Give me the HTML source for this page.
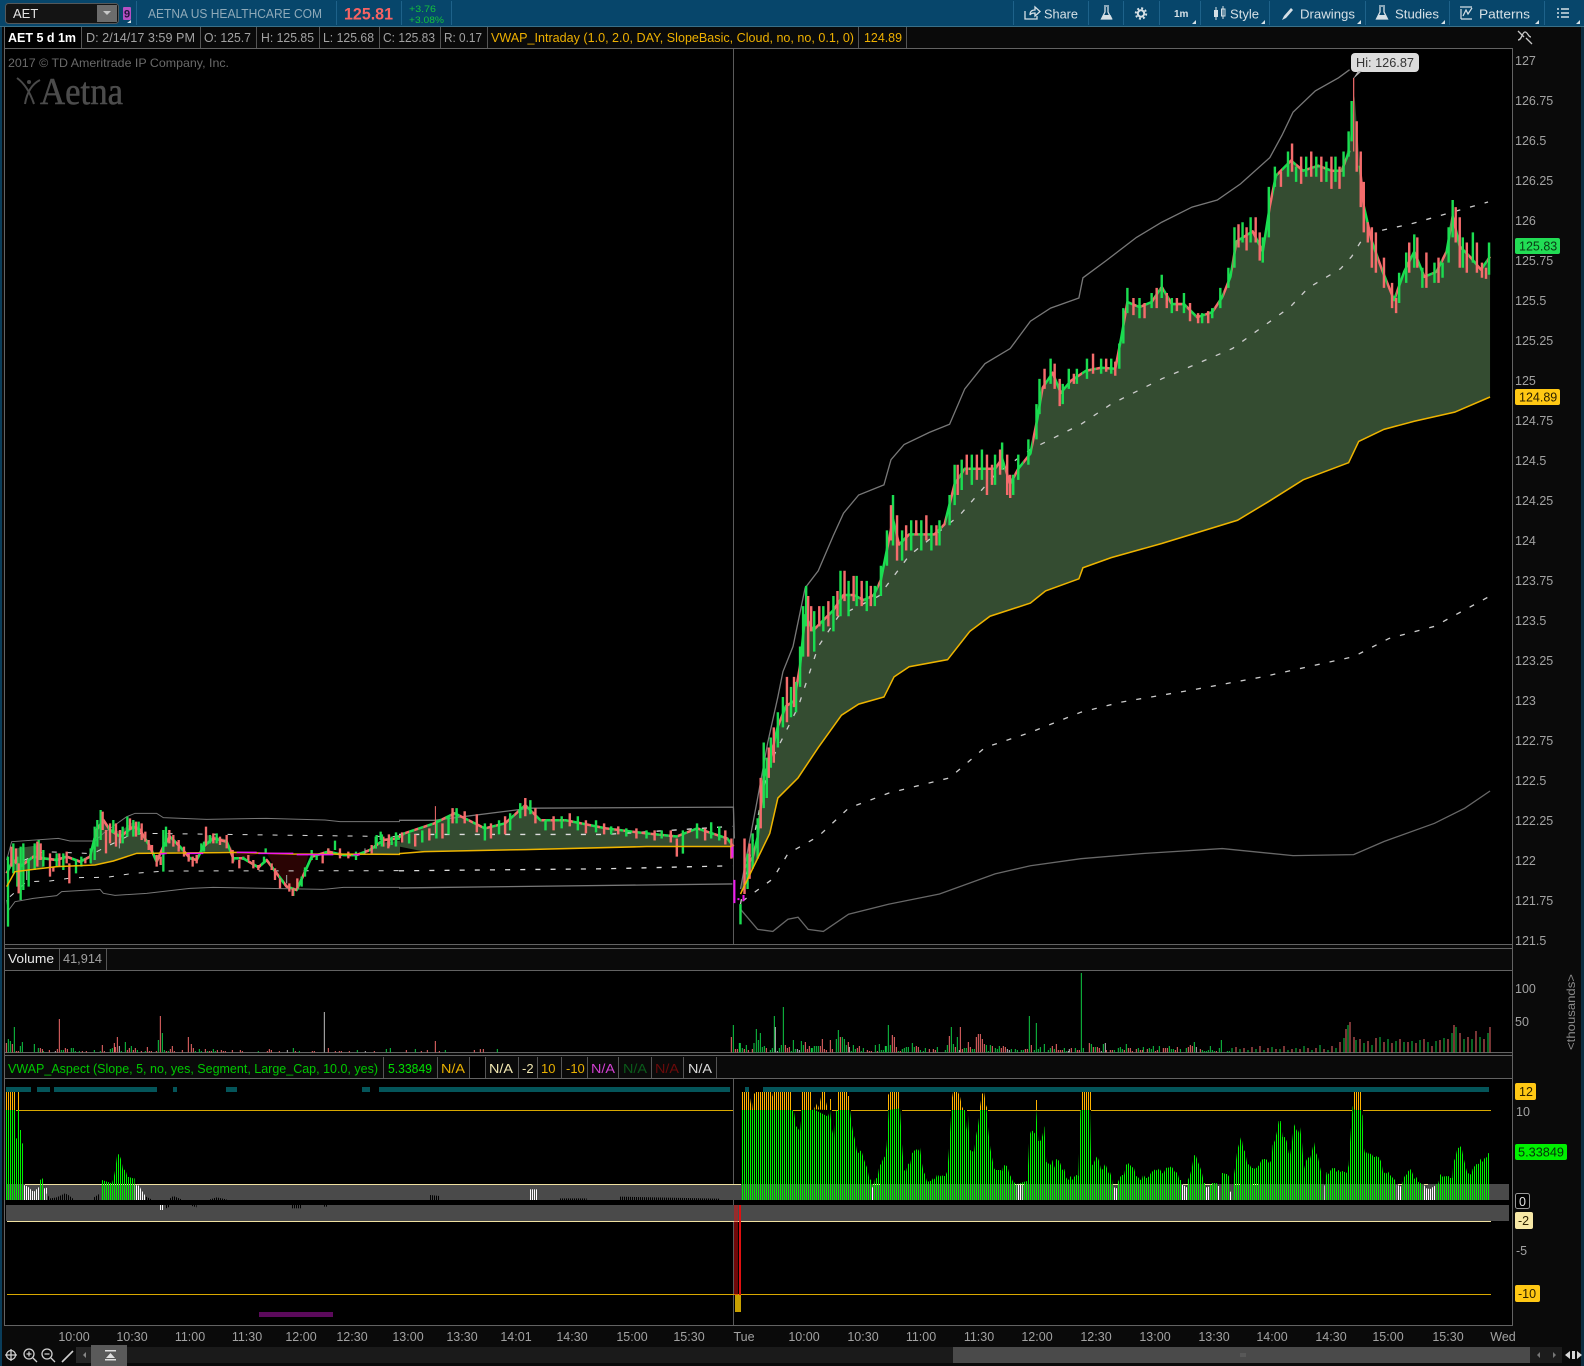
<!DOCTYPE html>
<html><head><meta charset="utf-8"><title>AET chart</title>
<style>
html,body{margin:0;padding:0;background:#0a0a0a;width:1584px;height:1366px;overflow:hidden}
svg{display:block}
text{font-family:"Liberation Sans",sans-serif;font-size:13px}
.ax text{font-size:12.5px;fill:#a2a2a2}
.tm text{font-size:12.5px;fill:#a2a2a2;text-anchor:middle}
.tb text{fill:#d6e0e6;font-size:13px}
</style></head><body>
<svg width="1584" height="1366" viewBox="0 0 1584 1366" xmlns="http://www.w3.org/2000/svg">
<defs>
<pattern id="g" width="6" height="6" patternUnits="userSpaceOnUse"><rect width="3" height="6" fill="#00f000"/></pattern>
<pattern id="o" width="6" height="6" patternUnits="userSpaceOnUse"><rect width="3" height="6" fill="#ffb400"/></pattern>
<pattern id="k" width="6" height="6" patternUnits="userSpaceOnUse"><rect width="3" height="6" fill="#000"/></pattern>
<pattern id="w" width="6" height="6" patternUnits="userSpaceOnUse"><rect width="3" height="6" fill="#fff"/></pattern>
<pattern id="cs" width="9" height="10" patternUnits="userSpaceOnUse"><rect width="5" height="10" fill="#1bdc50"/><rect x="5" width="4" height="10" fill="#f46c6c"/></pattern>
<pattern id="cz" width="27" height="30" patternUnits="userSpaceOnUse"><rect width="15" height="30" fill="#1bdc50"/><rect x="15" width="12" height="30" fill="#f46c6c"/></pattern>
</defs>
<rect width="1584" height="1366" fill="#0a0a0a"/>
<rect x="0" y="0" width="2" height="1366" fill="#0a3d5a"/>
<rect x="1581" y="0" width="3" height="1366" fill="#0a2c40"/>

<!-- top bar -->
<rect x="0" y="0" width="1584" height="26" fill="#07466b"/>
<rect x="0" y="26" width="1584" height="1" fill="#3a7088"/>
<g stroke="#1e628a" stroke-width="1"><path d="M136.500 1V25M336.500 1V25M401.500 1V25M451.500 1V25M1013.500 1V25M1088.500 1V25M1123.500 1V25M1159.500 1V25M1200.500 1V25M1269.500 1V25M1365.500 1V25M1449.500 1V25M1544.500 1V25"/></g>
<rect x="5.500" y="3.500" width="113" height="20" rx="3" fill="#141414" stroke="#54585a"/>
<rect x="97" y="5" width="20" height="17" fill="#6c6c6c"/>
<path d="M103 11h8l-4 4z" fill="#c8c8c8"/>
<text x="13" y="18" fill="#e2e2e2">AET</text>
<rect x="123" y="7" width="8" height="13" rx="1" fill="#b44fc4"/>
<text x="124" y="17.500" fill="#23123a" style="font-size:11px;font-weight:bold">9</text>
<path d="M127 23l4-3v3z" fill="#d8e0e6"/>
<text x="148" y="18" fill="#8faab9" textLength="174" lengthAdjust="spacingAndGlyphs">AETNA US HEALTHCARE COM</text>
<text x="344" y="19.500" fill="#f76363" style="font-size:17px;font-weight:bold" textLength="49" lengthAdjust="spacingAndGlyphs">125.81</text>
<text x="409" y="12" fill="#14c23c" style="font-size:9px" textLength="27" lengthAdjust="spacingAndGlyphs">+3.76</text>
<text x="409" y="23" fill="#14c23c" style="font-size:9px" textLength="35" lengthAdjust="spacingAndGlyphs">+3.08%</text>

<g class="tb">
<path d="M1025 11v8h12v-3M1030 15c0-4 2-5 5-5v-3l5 4.500-5 4.500v-3c-2 0-4 0-5 2z" fill="none" stroke="#d6e0e6" stroke-width="1.300"/>
<text x="1044" y="18.500" textLength="34" lengthAdjust="spacingAndGlyphs">Share</text>
<path d="M1104 6h5M1105 7v5l-3.500 7h10l-3.500-7V7" fill="none" stroke="#d6e0e6" stroke-width="1.300"/><path d="M1103.500 15h7l2 4h-11z" fill="#d6e0e6"/>
<circle cx="1141" cy="13.500" r="3.200" fill="none" stroke="#d6e0e6" stroke-width="2"/><circle cx="1141" cy="13.500" r="5.200" fill="none" stroke="#d6e0e6" stroke-width="2" stroke-dasharray="2 2.080"/>
<text x="1174" y="17" style="font-size:10px;font-weight:bold">1m</text>
<path d="M1216 7v13M1223 6v13" stroke="#d6e0e6"/><rect x="1214" y="10" width="4" height="7" fill="#d6e0e6"/><rect x="1221.500" y="9" width="3.500" height="7" fill="none" stroke="#d6e0e6"/>
<text x="1230" y="18.500" textLength="29" lengthAdjust="spacingAndGlyphs">Style</text>
<path d="M1282 20l2-4 7-8 2 2-7 8z" fill="#d6e0e6"/>
<text x="1300" y="18.500" textLength="55" lengthAdjust="spacingAndGlyphs">Drawings</text>
<path d="M1379 6h6M1380 7v5l-3.500 7h11L1384 12V7" fill="none" stroke="#d6e0e6" stroke-width="1.300"/><path d="M1378.500 15h7l2 4h-11z" fill="#d6e0e6"/>
<text x="1395" y="18.500" textLength="44" lengthAdjust="spacingAndGlyphs">Studies</text>
<path d="M1460 7h12M1461 9v10M1461 19h11M1463 16l3-6 2 4 4-6" fill="none" stroke="#d6e0e6" stroke-width="1.200"/>
<text x="1479" y="18.500" textLength="51" lengthAdjust="spacingAndGlyphs">Patterns</text>
<path d="M1557 9h2M1557 13h2M1557 17h2M1561 9h8M1561 13h8M1561 17h8" stroke="#d6e0e6" stroke-width="1.500"/>
<path d="M1192 24l4-4v4zM1261 24l4-4v4zM1357 24l4-4v4zM1441 24l4-4v4zM1535 24l4-4v4zM1576 24l4-4v4z" fill="#d6e0e6"/>
</g>

<!-- header row -->
<rect x="5" y="27" width="76" height="21" fill="#000"/>
<text x="8" y="42" fill="#fff" style="font-weight:bold" textLength="68" lengthAdjust="spacingAndGlyphs">AET 5 d 1m</text>
<g fill="#a2a2a2">
<text x="86" y="42" textLength="109" lengthAdjust="spacingAndGlyphs">D: 2/14/17 3:59 PM</text>
<text x="204" y="42" textLength="47" lengthAdjust="spacingAndGlyphs">O: 125.7</text>
<text x="261" y="42" textLength="53" lengthAdjust="spacingAndGlyphs">H: 125.85</text>
<text x="323" y="42" textLength="51" lengthAdjust="spacingAndGlyphs">L: 125.68</text>
<text x="383" y="42" textLength="52" lengthAdjust="spacingAndGlyphs">C: 125.83</text>
<text x="444" y="42" textLength="38" lengthAdjust="spacingAndGlyphs">R: 0.17</text>
</g>
<text x="491" y="42" fill="#eeb000" textLength="363" lengthAdjust="spacingAndGlyphs">VWAP_Intraday (1.0, 2.0, DAY, SlopeBasic, Cloud, no, no, 0.1, 0)</text>
<text x="864" y="42" fill="#eeb000" textLength="38" lengthAdjust="spacingAndGlyphs">124.89</text>
<path d="M81.500 27V48M200.500 27V48M256.500 27V48M319.500 27V48M379.500 27V48M440.500 27V48M487.500 27V48M858.500 27V48M906.500 27V48" stroke="#555"/>

<!-- pane backgrounds -->
<rect x="5" y="49" width="1507" height="895" fill="#000"/>
<rect x="5" y="971" width="1507" height="81" fill="#000"/>
<rect x="5" y="1079" width="1507" height="246" fill="#000"/>
<g stroke="#636363" fill="none">
<path d="M4.500 27V1325.500H1512.500V48M4.500 48.500H1512.500M4.500 944.500H1512.500M4.500 948.500H1512.500M4.500 970.500H1512.500M4.500 1052.500H1512.500M4.500 1055.500H1512.500M4.500 1078.500H1512.500"/>
</g>
<path d="M733.500 49V944M733.500 1079V1325" stroke="#5a5a5a"/>

<text x="8" y="67" fill="#6a6a6a" style="font-size:12px" textLength="221" lengthAdjust="spacingAndGlyphs">2017 © TD Ameritrade IP Company, Inc.</text>
<path d="M17 78Q28 86 34 104M40 80Q28 86 25 104" fill="none" stroke="#4a4a4a" stroke-width="2"/><circle cx="29" cy="82" r="2" fill="#4a4a4a"/>
<text x="40" y="104" fill="#4c4c4c" stroke="#4c4c4c" stroke-width=".5" style="font-family:'Liberation Serif',serif;font-size:38px" textLength="83" lengthAdjust="spacingAndGlyphs">Aetna</text>

<!-- MONDAY left part in zoom coords -->
<g transform="translate(0,780) scale(.33333)">
<g fill="#344c31">
<polygon points="40,270 50,205 120,195 130,262 45,272"/>
<polygon points="270,252 290,150 310,115 330,145 360,155 400,125 420,145 450,205 460,218 410,220 340,243 285,255"/>
<polygon points="490,220 495,160 520,172 555,215"/>
<polygon points="600,216 620,165 680,178 700,215"/>
<polygon points="1110,222 1130,190 1200,182 1200,222"/>
</g>
<g fill="#2a0404">
<polygon points="700,220 720,240 780,220"/>
<polygon points="800,220 830,270 860,320 890,325 915,265 925,225"/>
</g>
<g fill="none" stroke-width="3">
<path stroke="#777" d="M20 240L35 185L175 175L210 183L285 183L310 160L345 135L380 110L405 100L470 100L490 113L620 118L800 115L975 120L1020 125L1200 125"/>
<path stroke="#777" d="M20 360L25 392L45 365L100 355L170 347L185 335L300 328L310 340L345 346L440 340L570 325L640 322L970 328L1030 322L1200 322"/>
<path stroke="#ddd" stroke-dasharray="15 30" d="M30 260L130 215L260 220L290 215L390 165L430 160L1200 170"/>
<path stroke="#ddd" stroke-dasharray="15 30" d="M30 350L80 305L150 303L220 293L320 292L400 280L500 273L1200 272"/>
</g>
<path fill="none" stroke="url(#cz)" stroke-width="8" stroke-linejoin="round" d="M20 280L40 240L60 260L100 230L130 235L170 240L200 230L240 245L270 230L290 150L310 120L330 150L360 170L400 140L420 150L450 200L470 245L490 200L510 170L540 200L570 235L590 240L610 200L640 175L680 185L700 235L730 235L775 262L800 240L830 280L860 320L890 330L915 275L935 230L985 215L1030 225L1070 225L1110 210L1150 180L1200 175"/>
<g fill="none" stroke-width="7">
<path stroke="#1bdc50" d="M24 230V440M40 190V280M52 230V320M62 200V360M70 190V330M86 240V320M104 190V270M116 180V240M130 210V260M170 220V260M190 220V270M228 240V280M244 230V260M272 205V250M284 140V240M292 120V200M302 90V180M340 120V160M368 140V190M382 110V170M400 120V170M416 125V165M490 150V275M498 140V200M604 190V220M612 185V215M630 165V190M650 160V190M700 235V245M730 230V240M792 230V250M797 205V220M880 325V348M905 290V320M915 262V290M935 210V240M950 225V240M985 205V225M1005 182V210M1068 215V240M1130 165V190M1142 155V180M1175 170V195M1195 165V180"/>
<path stroke="#f46c6c" d="M34 200V260M48 205V250M56 250V340M112 185V260M122 190V240M150 220V290M160 260V275M178 220V260M200 215V250M208 250V310M256 235V250M308 95V150M318 150V220M330 130V190M348 130V200M360 150V190M390 115V150M408 125V170M425 130V180M436 155V185M446 180V210M456 195V215M470 225V260M482 230V255M508 150V190M520 165V200M536 180V215M552 200V230M566 220V245M578 230V260M590 225V250M618 140V190M640 160V190M660 170V195M680 165V205M698 210V250M718 240V265M745 225V240M760 240V265M775 255V270M815 250V270M825 265V300M840 295V325M868 310V335M878 325V348M892 295V325M968 220V250M985 205V225M1020 205V235M1045 215V235M1115 195V220M1150 170V200M1165 175V205M1188 165V190"/>
<path stroke="#aaa" stroke-width="3" d="M358 175V205M80 270V300M860 285V310M1095 205V225"/>
</g>
<path fill="none" stroke="#eeb400" stroke-width="4.500" d="M20 320L45 275L100 268L170 260L285 255L340 243L410 220L660 218L710 217L880 222L1200 223"/>
<path fill="none" stroke="#f018f0" stroke-width="4.500" d="M480 222L500 220M560 220H610M710 217H770M775 220H880M890 224H1000M1060 224H1080"/>
</g>

<!-- main chart in display coords -->
<g transform="scale(1.0102)">
<!-- Monday right part -->
<polygon fill="#344c31" points="395,838 400,825 430,815 450,805 480,820 500,815 520,797 535,812 560,812 600,820 640,825 670,828 690,820 720,830 726,838 640,838 520,841 420,843"/>
<g fill="none" stroke-width="1.300">
<path stroke="#777" d="M395 812L430 812L525 800L726 799L727 830"/>
<path stroke="#777" d="M395 879L725 875"/>
<path stroke="#ddd" stroke-dasharray="5 10" d="M395 826H600L725 818"/>
<path stroke="#ddd" stroke-dasharray="5 10" d="M395 862L600 860L725 857"/>
</g>
<path fill="none" stroke="url(#cs)" stroke-width="2.500" stroke-linejoin="round" d="M395 829L400 825L430 815L450 805L480 820L500 815L520 797L535 812L560 812L600 820L640 825L670 828L690 820L720 830L726 838"/>
<g fill="none" stroke-width="2.400">
<path stroke="#1bdc50" d="M372 828V840M378 826V838M392 824V838M405 825V835M418 822V834M432 812V830M444 808V826M452 800V815M480 815V832M494 812V826M505 805V822M515 795V810M525 792V806M540 812V822M556 808V820M572 808V822M590 812V824M605 818V826M620 820V828M640 822V830M655 822V830M676 822V845M690 815V830M704 814V830M712 818V832"/>
<path stroke="#f46c6c" d="M385 826V838M398 824V834M411 826V838M425 820V832M438 815V830M448 800V815M460 803V815M472 806V824M486 815V830M500 808V826M520 790V808M530 800V815M548 808V822M564 805V818M580 812V825M598 815V826M612 818V826M630 820V830M648 822V832M664 822V834M670 830V848M698 820V832M718 822V836M724 830V850"/>
<path stroke="#f46c6c" stroke-width="1" d="M431 798V825"/>
</g>
<path fill="none" stroke="#eeb400" stroke-width="1.500" d="M395 845L420 843L520 841L640 838L725 838"/>

<!-- Tuesday cloud -->
<polygon fill="#344c31" points="733,885 737,860 745,850 750,830 756,770 763,750 770,720 778,700 786,695 792,660 797,610 805,625 815,615 825,605 835,590 845,590 855,595 865,590 872,575 878,545 884,515 890,540 900,530 912,530 925,530 935,520 945,480 955,465 970,465 985,465 992,455 1000,480 1008,465 1020,450 1027,415 1032,385 1042,370 1050,390 1060,378 1075,368 1090,365 1104,366 1110,335 1116,300 1128,305 1140,300 1150,285 1160,302 1172,302 1185,315 1200,310 1210,295 1218,275 1224,240 1240,230 1250,250 1257,205 1263,175 1278,160 1290,170 1305,165 1318,170 1328,170 1336,140 1341,95 1345,150 1350,205 1358,240 1368,268 1380,298 1390,270 1400,250 1410,275 1422,270 1432,250 1438,215 1445,245 1455,255 1466,268 1475,255 1475,393 1440,408 1400,417 1370,425 1345,437 1335,458 1290,475 1255,497 1225,515 1150,538 1100,552 1072,562 1068,573 1035,585 1020,597 980,610 960,625 938,653 900,660 885,670 875,690 850,697 833,708 810,740 790,770 770,790 762,825 745,860 733,885"/>
<g fill="none" stroke-width="1.300">
<path stroke="#787878" d="M733 880L750 790L760 735L770 690L775 665L785 640L797 582L810 565L825 530L835 508L850 490L875 480L882 455L895 440L920 428L940 420L955 385L975 360L1000 345L1020 318L1040 305L1068 295L1072 275L1095 258L1125 235L1150 220L1180 205L1205 198L1228 182L1257 156L1269 134L1280 111L1302 90L1325 77L1336 69"/>
<path stroke="#686868" d="M733 900L750 920L765 922L780 910L790 908L800 920L815 922L840 905L880 895L930 885L985 865L1020 857L1070 850L1130 845L1210 840L1280 847L1340 846L1370 833L1420 815L1450 800L1475 783"/>
<path stroke="#ccc" stroke-dasharray="5 10" d="M733 895L760 760L790 700L810 640L830 610L870 590L900 550L950 510L985 470L1020 445L1070 420L1100 400L1150 375L1220 345L1277 304L1295 285L1327 266L1338 254L1349 236L1359 230L1399 221L1473 200"/>
<path stroke="#ccc" stroke-dasharray="5 10" d="M735 892L765 870L780 845L810 828L840 800L880 785L940 770L975 740L1020 725L1070 705L1110 695L1180 683L1250 670L1340 650L1375 632L1420 620L1475 590"/>
</g>
<path fill="none" stroke="url(#cs)" stroke-width="2.500" stroke-linejoin="round" transform="translate(0,-1)" d="M737 860L745 850L750 830L756 770L763 750L770 720L778 700L786 695L792 660L797 610L805 625L815 615L825 605L835 590L845 590L855 595L865 590L872 575L878 545L884 515L890 540L900 530L912 530L925 530L935 520L945 480L955 465L970 465L985 465L992 455L1000 480L1008 465L1020 450L1027 415L1032 385L1042 370L1050 390L1060 378L1075 368L1090 365L1104 366L1110 335L1116 300L1128 305L1140 300L1150 285L1160 302L1172 302L1185 315L1200 310L1210 295L1218 275L1224 240L1240 230L1250 250L1257 205L1263 175L1278 160L1290 170L1305 165L1318 170L1328 170L1336 150M1346 165L1350 205L1358 240L1368 268L1380 298L1390 270L1400 250L1410 275L1422 270L1432 250L1438 215L1445 245L1455 255L1466 268L1475 255"/>
<g fill="none" stroke-width="2.400">
<path stroke="#1bdc50" d="M733 895V915M740 845V880M745 825V860M750 810V850M756 735V800M759 750V790M763 730V760M770 705V740M775 690V720M783 680V710M788 675V705M792 640V680M795 600V650M798 580V620M806 605V645M815 600V625M825 590V625M832 565V610M840 575V610M848 570V600M858 575V605M866 580V600M872 560V590M878 525V560M884 490V540M893 525V555M902 515V545M912 515V545M922 520V545M930 515V540M940 490V520M945 460V500M952 455V485M962 450V480M972 445V475M985 450V480M992 438V465M1003 470V490M1008 450V475M1018 435V460M1026 400V435M1029 375V410M1040 355V380M1052 380V400M1058 365V385M1066 365V380M1076 355V375M1090 355V370M1100 355V370M1108 340V365M1112 305V340M1116 285V310M1128 295V315M1140 290V305M1150 272V295M1160 295V310M1172 290V310M1190 310V320M1200 305V315M1208 285V305M1216 265V285M1222 225V265M1230 220V240M1238 215V240M1250 235V260M1256 185V235M1262 165V185M1275 150V175M1283 165V180M1293 155V175M1303 155V175M1313 160V180M1322 155V180M1330 150V175M1335 130V155M1338 100V140M1385 270V300M1392 250V280M1400 232V265M1408 265V285M1420 260V280M1428 260V275M1434 225V260M1438 198V235M1448 235V265M1458 230V260M1474 240V272"/>
<path stroke="#f46c6c" d="M737 830V885M742 835V870M753 770V820M761 740V770M766 720V755M779 670V715M786 670V700M800 590V650M803 600V625M811 600V620M820 595V620M829 585V610M836 565V595M845 570V595M853 575V600M862 580V600M882 500V535M888 510V555M897 520V545M907 515V530M917 510V535M927 520V540M948 460V490M957 450V470M967 450V475M977 450V490M982 460V480M990 445V470M997 450V490M1000 470V493M1034 365V385M1044 360V385M1049 375V402M1063 370V380M1082 350V370M1095 355V368M1104 358V372M1122 295V312M1133 300V315M1145 285V305M1155 290V305M1165 295V308M1178 300V318M1186 310V320M1196 308V320M1226 222V245M1234 225V248M1243 215V240M1247 230V258M1268 170V185M1279 142V170M1288 155V182M1298 150V175M1308 155V180M1318 155V187M1326 165V187M1343 120V170M1347 150V205M1350 180V230M1354 220V240M1358 225V265M1362 230V270M1370 255V285M1378 280V305M1382 295V310M1395 240V270M1403 235V265M1412 250V285M1424 255V280M1441 205V240M1445 215V265M1452 240V270M1462 240V270M1467 260V275M1471 265V276"/>
<path stroke="#f46c6c" stroke-width="1.200" d="M1340 77V150"/>
</g>
<path fill="none" stroke="#eeb400" stroke-width="1.500" d="M733 885L745 860L762 825L770 790L790 770L810 740L833 708L850 697L875 690L885 670L900 660L938 653L960 625L980 610L1020 597L1035 585L1068 573L1072 562L1100 552L1150 538L1225 515L1255 497L1290 475L1335 458L1345 437L1370 425L1400 417L1440 408L1475 393"/>
<path fill="none" stroke="#f018f0" stroke-width="2" d="M725 838V849M727 871V894M730 890H732M736 886V892"/>
</g>

<!-- Hi tag -->
<rect x="1351" y="53" width="68" height="19" rx="4" fill="#dcdcdc"/>
<path d="M1358 71l-5 8 9-8z" fill="#b5b5b5"/>
<text x="1356" y="67" fill="#333" textLength="58" lengthAdjust="spacingAndGlyphs">Hi: 126.87</text>

<!-- price axis -->
<path d="M1518 31l6 6M1532 44l-6-6M1518 40c4 0 4-8 7-8s3 5 6 5" fill="none" stroke="#c8c8c8" stroke-width="1.300"/>
<g class="ax">
<text x="1515" y="65">127</text><text x="1515" y="105">126.75</text><text x="1515" y="145">126.5</text><text x="1515" y="185">126.25</text><text x="1515" y="225">126</text><text x="1515" y="265">125.75</text><text x="1515" y="305">125.5</text><text x="1515" y="345">125.25</text><text x="1515" y="385">125</text><text x="1515" y="425">124.75</text><text x="1515" y="465">124.5</text><text x="1515" y="505">124.25</text><text x="1515" y="545">124</text><text x="1515" y="585">123.75</text><text x="1515" y="625">123.5</text><text x="1515" y="665">123.25</text><text x="1515" y="705">123</text><text x="1515" y="745">122.75</text><text x="1515" y="785">122.5</text><text x="1515" y="825">122.25</text><text x="1515" y="865">122</text><text x="1515" y="905">121.75</text><text x="1515" y="945">121.5</text>
<text x="1515" y="993">100</text><text x="1515" y="1026">50</text>
<text x="1516" y="1116">10</text><text x="1516" y="1255">-5</text>
</g>
<text transform="translate(1575,1050) rotate(-90)" fill="#8a8a8a" style="font-size:12px" textLength="76" lengthAdjust="spacingAndGlyphs">&lt;thousands&gt;</text>
<rect x="1515" y="238" width="45" height="16" rx="2" fill="#22dd55"/><text x="1519" y="250.500" fill="#0a3a14" style="font-size:12.500px">125.83</text>
<rect x="1515" y="389" width="45" height="16" rx="2" fill="#ffc814"/><text x="1519" y="401.500" fill="#2c2000" style="font-size:12.500px">124.89</text>

<!-- volume pane header -->
<text x="8" y="963" fill="#e8e8e8" textLength="46" lengthAdjust="spacingAndGlyphs">Volume</text>
<text x="63" y="963" fill="#a2a2a2" textLength="39" lengthAdjust="spacingAndGlyphs">41,914</text>
<path d="M59.500 949V970M106.500 949V970" stroke="#555"/>

<!-- volume bars left -->
<g transform="translate(0,965) scale(.33333)" fill="none" stroke-width="3">
<path stroke="#0ecb44" d="M25 262V222M31 262V228M43 262V186M61 262V243M67 262V231M103 262V237M115 262V249M130 262V258M184 262V255M190 262V255M214 262V249M220 262V249M226 262V258M238 262V258M283 262V255M301 262V258M331 262V252M337 262V249M364 262V258M376 262V231M394 262V243M412 262V255M436 262V258M475 262V225M487 262V204M493 262V255M505 262V258M586 262V258M598 262V252M604 262V258M622 262V258M640 262V252M646 262V258M775 262V258M880 262V249M898 262V258M1072 262V255M1159 262V252M1171 262V249M1246 262V252M1336 262V255M1492 262V252"/>
<path stroke="#f26a6a" d="M19 262V234M37 262V237M49 262V258M55 262V258M121 262V249M127 262V252M148 262V255M172 262V252M178 262V162M196 262V249M202 262V252M247 262V258M259 262V258M307 262V240M313 262V258M343 262V234M346 262V246M352 262V216M382 262V255M388 262V249M400 262V255M406 262V249M424 262V258M442 262V246M448 262V258M454 262V258M469 262V258M481 262V153M499 262V258M511 262V252M517 262V243M523 262V258M547 262V255M565 262V216M574 262V237M580 262V249M616 262V252M628 262V258M634 262V258M652 262V255M664 262V255M670 262V258M676 262V258M697 262V255M721 262V255M727 262V258M802 262V258M808 262V252M814 262V255M838 262V258M886 262V258M937 262V258M943 262V258M985 262V249M1006 262V258M1018 262V258M1024 262V258M1048 262V258M1123 262V258M1219 262V255M1264 262V258M1282 262V255M1306 262V228M1318 262V258M1423 262V255M1441 262V252M1450 262V252"/>
<path stroke="#bbb" d="M166 262V258M358 262V243M862 262V255M973 262V141M1096 262V258"/>
</g>
<!-- volume bars right -->
<g transform="translate(730,965) scale(.33333)" fill="none" stroke-width="3">
<path stroke="#0ecb44" d="M10 262V180M28 262V234M31 262V234M37 262V249M49 262V240M72 262V234M79 262V192M85 262V225M91 262V204M97 262V246M103 262V243M121 262V255M127 262V249M133 262V153M148 262V249M154 262V240M160 262V126M184 262V258M190 262V225M196 262V252M214 262V228M220 262V240M244 262V249M247 262V249M253 262V243M259 262V243M265 262V243M319 262V222M325 262V195M337 262V216M343 262V222M349 262V240M364 262V258M370 262V240M376 262V252M394 262V258M400 262V249M436 262V240M448 262V237M454 262V255M460 262V255M466 262V243M469 262V243M475 262V180M481 262V240M505 262V258M517 262V252M523 262V249M529 262V246M535 262V246M547 262V234M553 262V246M571 262V255M580 262V258M586 262V249M622 262V246M646 262V255M652 262V240M664 262V186M670 262V237M682 262V216M703 262V249M709 262V249M727 262V252M733 262V252M769 262V240M775 262V258M781 262V240M796 262V249M802 262V252M808 262V243M844 262V252M856 262V252M862 262V255M874 262V255M880 262V255M898 262V153M913 262V255M919 262V174M925 262V252M931 262V246M943 262V237M955 262V255M961 262V249M973 262V252M1003 262V249M1009 262V258M1036 262V249M1054 262V24M1060 262V249M1084 262V237M1096 262V246M1120 262V237M1153 262V255M1165 262V249M1171 262V246M1177 262V252M1189 262V237M1225 262V249M1240 262V246M1258 262V249M1264 262V252M1270 262V243M1288 262V243M1318 262V243M1324 262V252M1330 262V252M1351 262V252M1369 262V249M1393 262V231M1417 262V255M1423 262V258M1429 262V258M1435 262V255M1441 262V243M1447 262V255M1453 262V258M1468 262V249M1474 262V225M1492 262V258M1498 262V258"/>
<path stroke="#f26a6a" d="M4 262V216M16 262V252M22 262V252M43 262V252M55 262V255M67 262V252M109 262V249M166 262V240M172 262V249M178 262V246M226 262V231M232 262V252M238 262V243M271 262V243M277 262V222M283 262V252M289 262V255M301 262V225M307 262V252M331 262V216M355 262V231M382 262V249M388 262V243M412 262V255M418 262V258M424 262V258M442 262V258M487 262V210M493 262V216M499 262V246M511 262V258M559 262V243M565 262V246M598 262V252M610 262V252M616 262V255M658 262V213M676 262V246M691 262V186M697 262V252M715 262V231M721 262V246M739 262V216M745 262V207M751 262V207M757 262V222M763 262V237M787 262V243M814 262V249M820 262V243M826 262V246M886 262V252M892 262V252M904 262V240M967 262V243M979 262V237M985 262V255M991 262V255M997 262V255M1024 262V249M1042 262V255M1048 262V255M1078 262V234M1090 262V246M1102 262V246M1108 262V249M1129 262V255M1141 262V255M1147 262V255M1183 262V255M1195 262V249M1201 262V249M1207 262V258M1219 262V252M1231 262V255M1237 262V255M1252 262V252M1276 262V258M1282 262V255M1300 262V249M1306 262V249M1312 262V249M1336 262V255M1342 262V246M1375 262V246M1381 262V240M1387 262V243M1411 262V252M1459 262V258"/>
<path stroke="#bbb" d="M136 262V186M142 262V258M202 262V252M208 262V255M358 262V246M688 262V255M832 262V252M838 262V255M1015 262V258M1018 262V252M1114 262V258M1126 262V234M1399 262V246"/>
</g>
<g transform="translate(1230,965) scale(.33333)" fill="none" stroke-width="3">
<path stroke="#0ecb44" d="M6 262V249M30 262V252M54 262V255M78 262V252M102 262V255M126 262V246M150 262V252M174 262V255M198 262V249M222 262V243M246 262V255M270 262V240M294 262V255M318 262V249M342 262V219M354 262V180M378 262V225M402 262V234M426 262V240M450 262V216M474 262V222M498 262V228M522 262V231M546 262V228M570 262V225M594 262V231M618 262V228M642 262V219M666 262V204M678 262V186M702 262V222M726 262V222M750 262V216M774 262V204"/>
<path stroke="#f26a6a" d="M18 262V246M42 262V249M66 262V246M90 262V243M114 262V249M138 262V252M162 262V243M186 262V252M210 262V252M234 262V249M258 262V249M282 262V252M306 262V243M330 262V231M348 262V192M360 262V171M372 262V216M390 262V222M414 262V228M438 262V219M462 262V231M486 262V234M510 262V222M534 262V231M558 262V234M582 262V222M606 262V243M630 262V225M654 262V222M672 262V180M690 262V204M714 262V216M738 262V198M762 262V222M780 262V186"/>
</g>

<!-- aspect header -->
<text x="8" y="1073" fill="#00c800" textLength="370" lengthAdjust="spacingAndGlyphs">VWAP_Aspect (Slope, 5, no, yes, Segment, Large_Cap, 10.0, yes)</text>
<text x="388" y="1073" fill="#00e000" textLength="44" lengthAdjust="spacingAndGlyphs">5.33849</text>
<text x="441" y="1073" fill="#e8b000" textLength="24" lengthAdjust="spacingAndGlyphs">N/A</text>
<rect x="470" y="1057" width="15" height="21" fill="#000"/>
<text x="489" y="1073" fill="#f0e6b0" textLength="24" lengthAdjust="spacingAndGlyphs">N/A</text>
<text x="522" y="1073" fill="#f0e6b0">-2</text>
<text x="541" y="1073" fill="#e8b000">10</text>
<text x="566" y="1073" fill="#e8b000">-10</text>
<text x="591" y="1073" fill="#d040d0" textLength="24" lengthAdjust="spacingAndGlyphs">N/A</text>
<text x="623" y="1073" fill="#0a5a1a" textLength="24" lengthAdjust="spacingAndGlyphs">N/A</text>
<text x="655" y="1073" fill="#6a0a0a" textLength="24" lengthAdjust="spacingAndGlyphs">N/A</text>
<text x="688" y="1073" fill="#d8d8d8" textLength="24" lengthAdjust="spacingAndGlyphs">N/A</text>
<path d="M383.500 1057V1078M437.500 1057V1078M469.500 1057V1078M485.500 1057V1078M518.500 1057V1078M537.500 1057V1078M561.500 1057V1078M587.500 1057V1078M618.500 1057V1078M651.500 1057V1078M683.500 1057V1078M716.500 1057V1078" stroke="#555"/>

<!-- aspect bands -->
<rect x="6" y="1184" width="1503" height="16" fill="#4a4a4a"/>
<rect x="6" y="1205" width="1503" height="16" fill="#4a4a4a"/>
<g fill="#04555a">
<rect x="6" y="1087" width="25" height="5"/><rect x="37" y="1087" width="13" height="5"/><rect x="54" y="1087" width="103" height="5"/><rect x="173" y="1087" width="4" height="5"/><rect x="226" y="1087" width="11" height="5"/><rect x="362" y="1087" width="8" height="5"/><rect x="379" y="1087" width="351" height="5"/><rect x="745" y="1087" width="4" height="5"/><rect x="763" y="1087" width="726" height="5"/>
</g>
<g stroke-width="1" fill="none">
<path stroke="#d8a800" d="M16 1110.500H733M793 1110.500H801M832 1110.500H838M851 1110.500H888M902 1110.500H951M967 1110.500H980M988 1110.500H1081M1091 1110.500H1352M1363 1110.500H1491"/>
<path stroke="#efe0a0" d="M25 1184.500H741M873 1184.500H880M1015 1184.500H1025M1113 1184.500H1118M1183 1184.500H1188M1205 1184.500H1213M1235 1184.500H1240M1252 1184.500H1258M1424 1184.500H1428M1398 1184.500H1402"/>
<path stroke="#efe0a0" d="M7 1221.500H1491"/>
<path stroke="#d8a800" d="M7 1294.500H1491"/>
</g>
<path d="M735 1205V1295M737 1205V1295M739.500 1205V1295M740.500 1205V1295" stroke="#e01010"/>
<rect x="735" y="1295" width="6" height="17" fill="#c8a000"/>
<rect x="259" y="1312" width="74" height="5" fill="#5c0a5c"/>

<!-- Monday histogram -->
<g transform="translate(0,1060) scale(.33333)">
<polygon fill="url(#o)" points="18,96 48,96 48,150 18,150"/><polygon fill="url(#o)" points="54,96 60,96 60,150 54,150"/>
<polygon fill="url(#g)" points="18,420 18,150 48,150 48,235 54,235 54,150 60,150 60,210 66,210 66,250 72,250 72,420"/>
<polygon fill="url(#w)" points="72,375 84,380 96,392 102,395 120,378 120,420 72,420"/>
<polygon fill="url(#g)" points="120,360 132,353 132,420 120,420"/>
<polygon fill="url(#w)" points="132,385 142,383 142,420 132,420"/>
<polygon fill="url(#g)" points="306,360 336,370 342,348 346,327 352,280 358,285 364,300 370,333 376,327 382,350 400,355 404,355 404,420 306,420"/>
<polygon fill="url(#w)" points="404,375 418,377 424,390 430,398 436,408 438,420 404,420"/>
<polygon fill="url(#k)" points="140,400 150,415 170,412 195,400 205,405 222,418 222,420 140,420"/>
<polygon fill="url(#k)" points="282,412 300,400 300,420 282,420"/>
<polygon fill="url(#k)" points="438,410 455,418 455,420 438,420"/>
<polygon fill="url(#k)" points="510,415 520,408 545,418 545,420 510,420"/>
<polygon fill="url(#k)" points="630,418 650,412 680,418 680,420 630,420"/>
<polygon fill="url(#k)" points="498,435 510,435 510,440 498,445"/>
<polygon fill="url(#k)" points="576,435 590,435 590,442 576,438"/>
<polygon fill="url(#k)" points="876,435 906,435 906,445 876,445"/>
<polygon fill="url(#k)" points="972,435 984,435 984,440 972,440"/>
<polygon fill="url(#w)" points="480,435 492,435 492,450 480,450"/>
</g>
<g transform="translate(300,1060) scale(.33333)">
<polygon fill="url(#k)" points="390,405 420,408 420,420 390,420"/>
<polygon fill="url(#w)" points="690,388 714,388 714,420 690,420"/>
<polygon fill="url(#k)" points="780,415 860,415 860,420 780,420"/>
<polygon fill="url(#k)" points="960,410 1260,416 1260,420 960,420"/>
</g>

<!-- Tuesday histogram -->
<g transform="translate(730,1080) scale(.33333)">
<polygon fill="url(#o)" points="36,36 58,36 60,54 66,90 66,90 72,42 78,36 126,36 128,50 132,36 186,36 186,90 36,90"/>
<polygon fill="url(#o)" points="214,36 246,36 246,90 214,90"/>
<polygon fill="url(#o)" points="252,88 258,70 264,85 270,66 276,36 285,36 288,66 294,90"/>
<polygon fill="url(#o)" points="300,57 306,57 306,90 300,90"/>
<polygon fill="url(#o)" points="324,36 354,36 354,48 360,48 360,90 324,90"/>
<polygon fill="url(#o)" points="474,45 480,36 510,36 510,90 474,90"/>
<polygon fill="url(#o)" points="663,70 669,36 684,36 690,50 696,80 702,90 663,90"/>
<polygon fill="url(#o)" points="750,80 756,42 762,36 768,75 774,90 750,90"/>
<polygon fill="url(#o)" points="918,60 924,60 924,90 918,90"/>
<polygon fill="url(#o)" points="1053,36 1083,36 1083,90 1053,90"/>
<polygon fill="url(#g)" points="36,360 36,90 186,90 192,95 198,138 204,145 210,155 216,90 246,90 252,88 294,110 300,90 306,147 312,175 318,93 324,90 360,90 364,125 370,160 376,183 382,222 388,216 394,210 400,232 406,250 412,265 418,297 424,300 430,325 436,291 442,297 448,258 454,250 460,235 466,228 470,195 476,90 510,85 516,192 522,270 528,275 534,250 540,255 546,220 552,213 558,207 564,213 570,202 576,250 580,273 586,285 592,310 598,300 604,304 610,292 616,300 622,280 628,292 634,285 640,288 646,288 652,273 658,192 664,90 706,90 710,150 714,105 720,210 726,213 732,217 738,168 744,138 750,90 770,90 775,153 781,205 787,237 793,267 799,270 811,270 817,273 820,255 832,258 838,282 844,292 850,308 856,308 860,313 880,306 892,303 898,168 904,150 910,155 916,162 920,90 925,183 931,183 937,168 943,138 949,246 955,250 961,255 967,240 973,264 979,237 985,240 991,250 997,270 1003,267 1009,294 1015,300 1021,288 1027,300 1033,290 1039,285 1045,288 1051,90 1080,90 1084,258 1090,252 1096,237 1102,228 1108,246 1114,273 1120,264 1126,250 1130,262 1136,280 1140,276 1140,360"/>
<polygon fill="url(#w)" points="426,322 432,322 432,360 426,360"/>
<polygon fill="url(#w)" points="860,313 878,313 878,360 860,360"/>
</g>
<g transform="translate(1110,1080) scale(.33333)">
<polygon fill="url(#o)" points="732,36 754,36 754,90 732,90"/>
<polygon fill="url(#g)" points="0,360 0,276 6,297 12,360 24,360 24,306 30,291 36,285 42,285 48,255 54,249 60,255 66,261 72,264 78,288 84,291 90,300 96,297 100,282 106,294 112,294 118,288 124,276 130,273 136,267 142,273 148,264 154,276 160,282 166,267 172,261 178,264 184,258 190,267 196,279 202,276 208,300 214,300 214,360 234,360 234,300 240,285 246,261 252,225 258,228 264,246 270,261 276,279 282,309 286,309 286,360 300,360 300,315 306,309 318,309 324,312 324,360 332,360 334,279 340,279 346,282 352,282 358,291 362,360 368,360 370,294 376,258 382,210 388,189 394,168 400,207 406,216 412,255 418,252 424,264 430,264 436,267 442,261 448,255 454,240 460,237 466,237 472,240 478,252 484,240 488,195 494,183 500,159 506,123 512,123 518,171 524,171 530,183 536,219 540,225 546,186 552,132 558,147 564,159 570,141 576,186 582,267 588,243 594,231 600,237 606,213 612,186 618,219 624,231 630,261 636,288 638,360 644,360 646,300 650,276 656,282 662,270 668,264 674,264 680,276 686,270 692,276 698,273 704,276 710,279 716,255 722,156 728,78 734,90 752,90 758,108 760,195 766,225 772,213 778,225 784,219 790,231 796,231 802,228 808,234 814,246 820,282 826,276 832,282 838,273 840,273 840,360"/>
<polygon fill="url(#w)" points="12,322 24,326 24,360 12,360"/>
<polygon fill="url(#w)" points="216,313 234,324 234,360 216,360"/>
<polygon fill="url(#w)" points="288,322 298,320 298,360 288,360"/>
<polygon fill="url(#w)" points="324,318 330,318 330,360 324,360"/>
<polygon fill="url(#w)" points="360,335 366,335 366,360 360,360"/>
<polygon fill="url(#w)" points="640,316 644,316 644,360 640,360"/>
</g>
<g transform="translate(1300,1060) scale(.33333)">
<polygon fill="url(#g)" points="270,420 270,345 285,360 285,420"/>
<polygon fill="url(#w)" points="290,374 304,380 304,420 290,420"/>
<polygon fill="url(#g)" points="306,420 307,370 313,350 319,345 325,333 331,327 337,338 343,357 349,351 355,366 361,369 367,372 370,420"/>
<polygon fill="url(#w)" points="372,375 379,385 391,387 397,382 408,375 408,420 372,420"/>
<polygon fill="url(#g)" points="409,420 409,372 415,370 421,342 427,350 445,348 451,354 457,354 460,306 466,294 472,265 478,262 484,258 490,290 496,315 502,340 508,340 514,345 518,327 524,318 530,312 536,312 542,296 548,306 554,294 560,292 565,279 570,279 570,420"/>
</g>

<!-- right-axis tags -->
<rect x="1515" y="1083" width="21" height="17" rx="2" fill="#ffc814"/><text x="1519" y="1096" fill="#2c2000" style="font-size:12.500px">12</text>
<rect x="1515" y="1144" width="52" height="16" rx="2" fill="#00f000"/><text x="1518" y="1156.500" fill="#04330a" style="font-size:12.500px" textLength="46" lengthAdjust="spacingAndGlyphs">5.33849</text>
<rect x="1515.500" y="1193.500" width="14" height="15" rx="2" fill="#000" stroke="#999"/><text x="1519" y="1206" fill="#e0e0e0" style="font-size:12.500px">0</text>
<rect x="1515" y="1212" width="18" height="17" rx="2" fill="#f7e8a6"/><text x="1518" y="1225" fill="#2c2000" style="font-size:12.500px">-2</text>
<rect x="1515" y="1285" width="25" height="17" rx="2" fill="#ffc814"/><text x="1518" y="1298" fill="#2c2000" style="font-size:12.500px">-10</text>

<!-- time axis -->
<g class="tm">
<text x="74" y="1341">10:00</text><text x="132" y="1341">10:30</text><text x="190" y="1341">11:00</text><text x="247" y="1341">11:30</text><text x="301" y="1341">12:00</text><text x="352" y="1341">12:30</text><text x="408" y="1341">13:00</text><text x="462" y="1341">13:30</text><text x="516" y="1341">14:01</text><text x="572" y="1341">14:30</text><text x="632" y="1341">15:00</text><text x="689" y="1341">15:30</text><text x="744" y="1341">Tue</text><text x="804" y="1341">10:00</text><text x="863" y="1341">10:30</text><text x="921" y="1341">11:00</text><text x="979" y="1341">11:30</text><text x="1037" y="1341">12:00</text><text x="1096" y="1341">12:30</text><text x="1155" y="1341">13:00</text><text x="1214" y="1341">13:30</text><text x="1272" y="1341">14:00</text><text x="1331" y="1341">14:30</text><text x="1388" y="1341">15:00</text><text x="1448" y="1341">15:30</text><text x="1503" y="1341">Wed</text>
</g>

<!-- scrollbar -->
<rect x="76" y="1347" width="1454" height="16" fill="#1a1a1a"/>
<rect x="76" y="1347" width="15" height="16" fill="#262626"/>
<path d="M86 1352v6l-3-3z" fill="#888"/>
<rect x="91" y="1345" width="36" height="21" fill="#5a5a5a"/>
<path d="M105 1350h11v1.500h-11zM110.500 1353l4.500 5h-9zM105 1359h11v1.500h-11z" fill="#e0e0e0"/>
<rect x="953" y="1347" width="577" height="16" fill="#4a4a4a"/>
<path d="M1241 1353v4M1243 1353v4M1245 1353v4" stroke="#666"/>
<rect x="1530" y="1347" width="32" height="16" fill="#1c1c1c"/>
<path d="M1540 1352v6l-3-3zM1553 1352v6l3-3z" fill="#777"/>
<path d="M1570 1351v8l-5-4zM1572 1351h3v8h-3zM1577 1351v8l5-4z" fill="#d8d8d8"/>
<g fill="none" stroke="#d0d0d0" stroke-width="1.300">
<circle cx="11" cy="1355" r="4.500"/><path d="M5 1355h12M11 1349v12"/>
<circle cx="29" cy="1354" r="5"/><path d="M33 1358l4 4M26.500 1354h5M29 1351.500v5"/>
<circle cx="47" cy="1354" r="5"/><path d="M51 1358l4 4M44.500 1354h5"/>
<path d="M62 1362l11-11" stroke-width="1.600"/>
</g>
</svg>
</body></html>
